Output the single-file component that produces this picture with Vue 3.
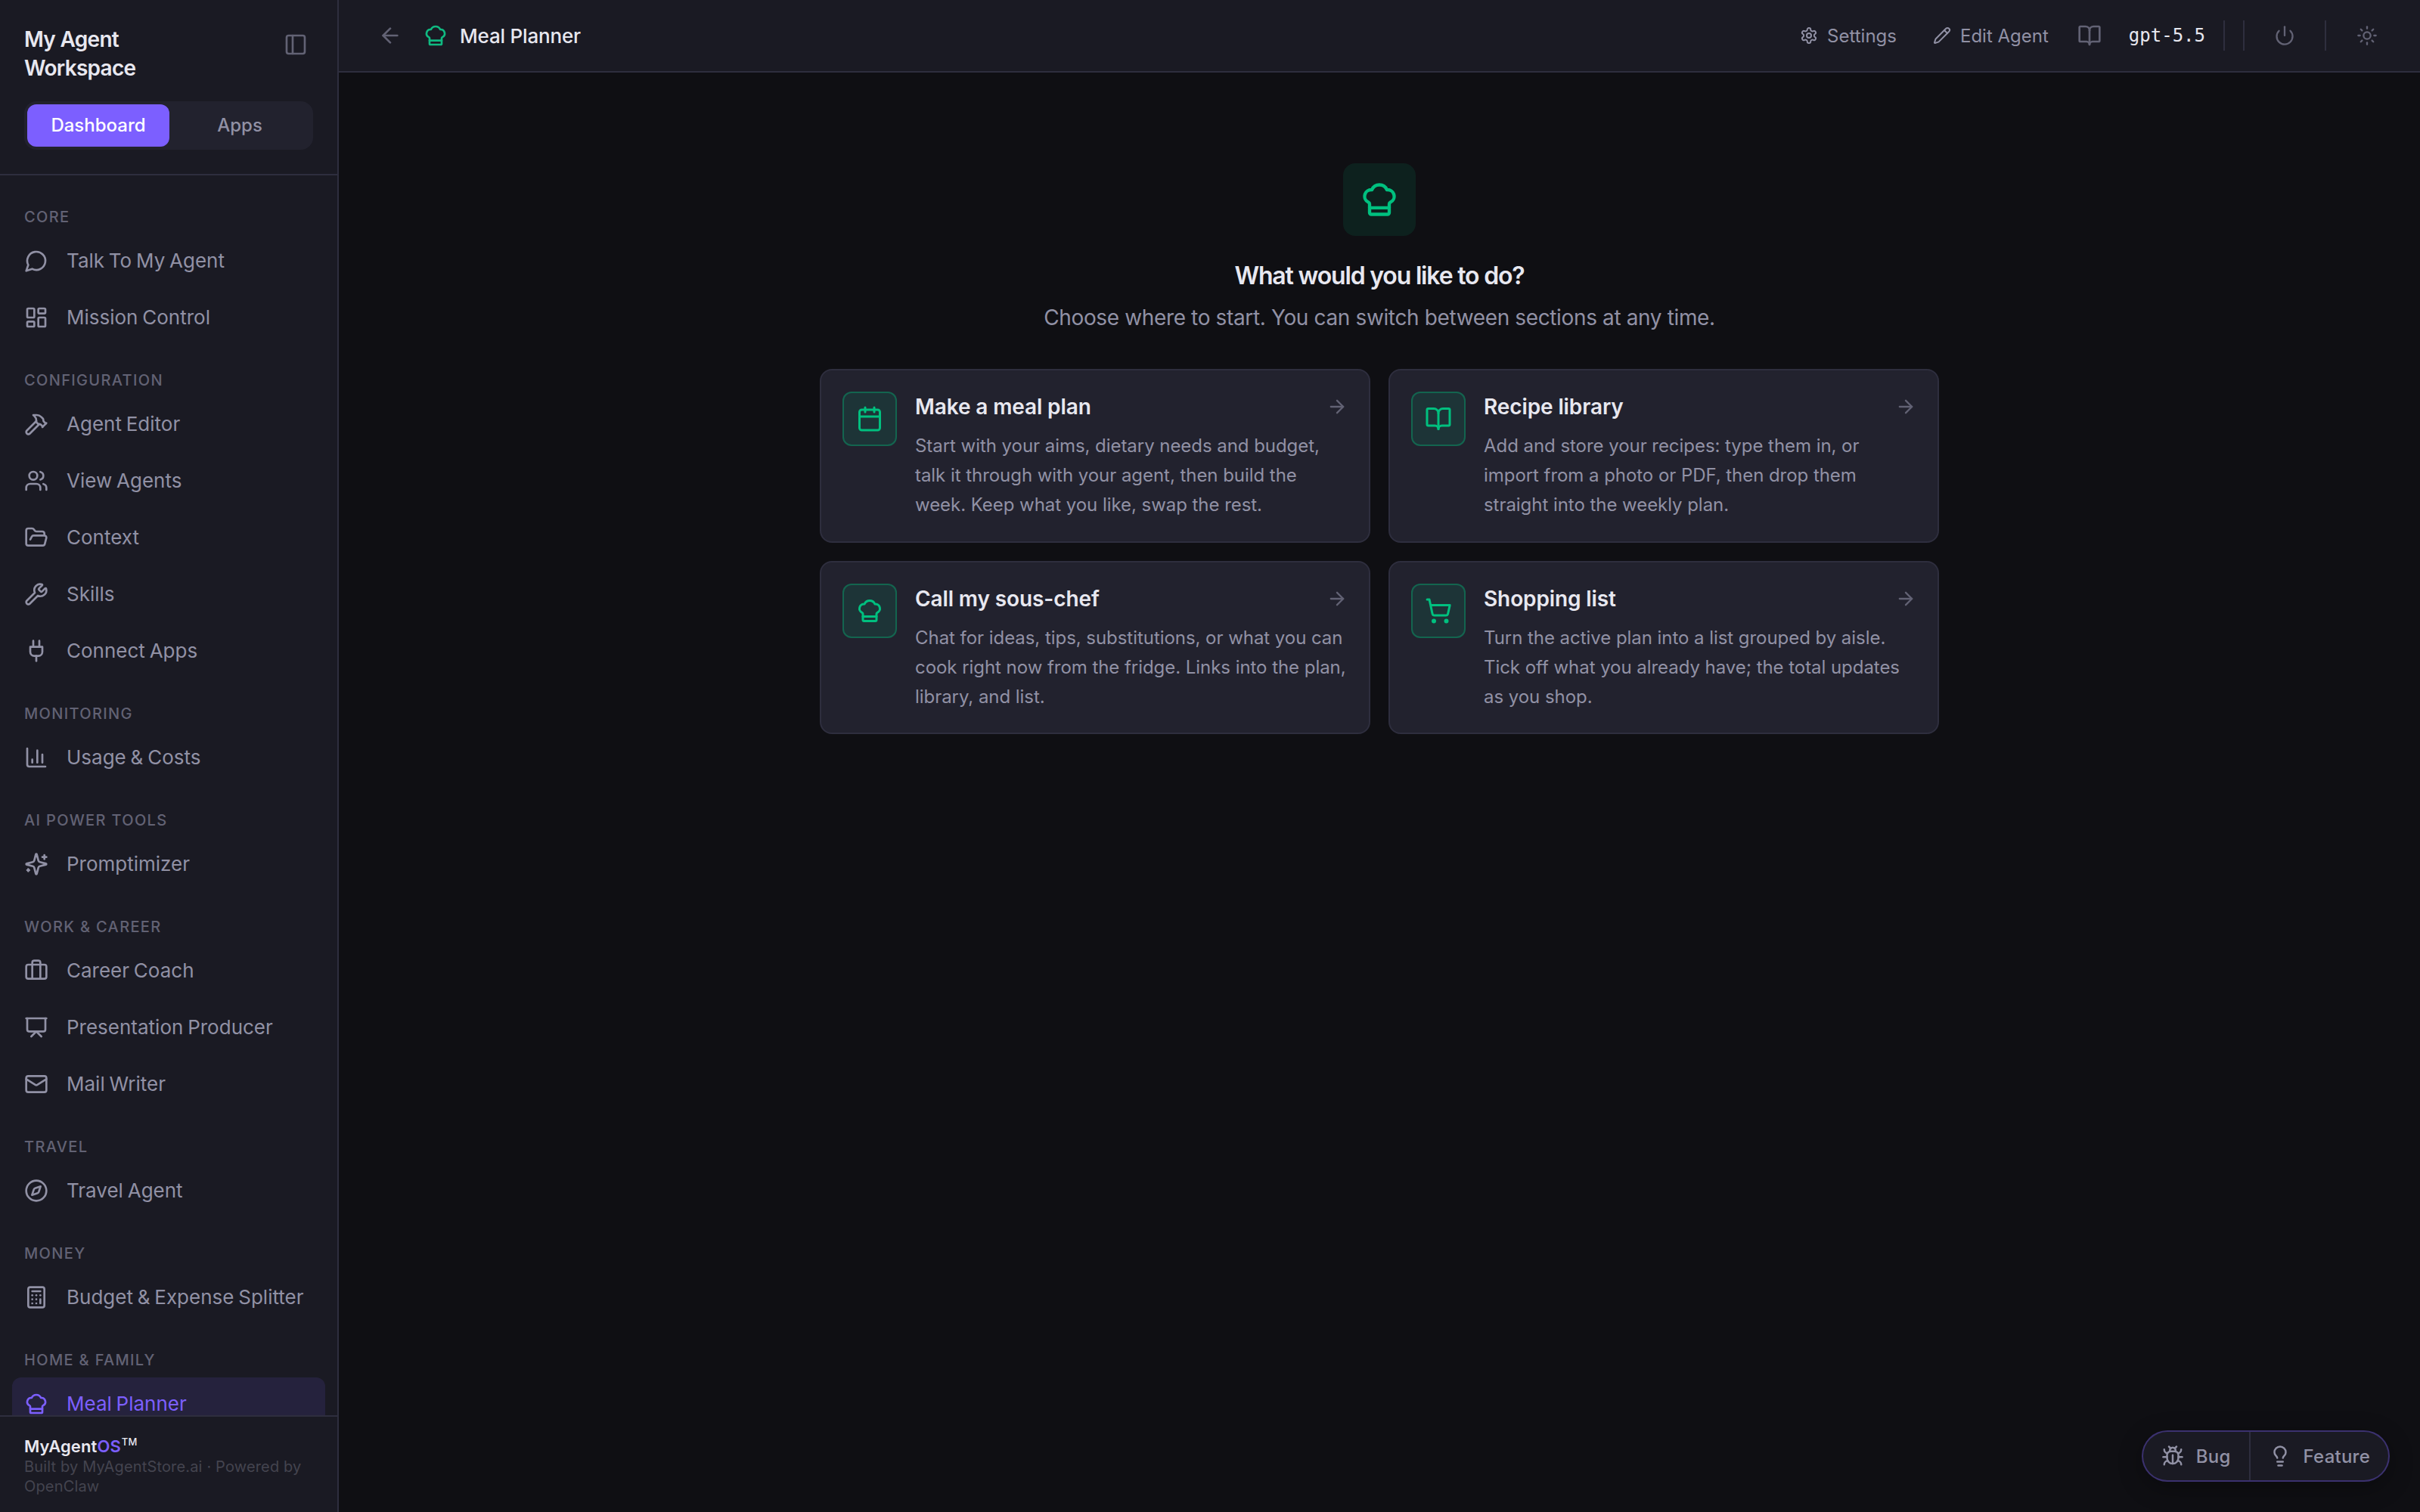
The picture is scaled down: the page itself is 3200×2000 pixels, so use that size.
<template>
  <div class="workspace">
    <aside class="sidebar">
      <div class="sidebar-head">
        <div class="brand-row">
          <h1 class="brand">My Agent<br>Workspace</h1>
          <button class="icon-btn collapse" aria-label="Collapse sidebar">
            <Icon name="panelLeft" :size="32" />
          </button>
        </div>
        <div class="tabs">
          <button
            v-for="tab in tabs"
            :key="tab"
            class="tab"
            :class="{ active: tab === activeTab }"
            @click="activeTab = tab"
          >{{ tab }}</button>
        </div>
      </div>

      <nav class="nav">
        <section v-for="group in groups" :key="group.title" class="nav-group">
          <h2 class="nav-title">{{ group.title }}</h2>
          <a
            v-for="item in group.items"
            :key="item.label"
            class="nav-item"
            :class="{ active: item.label === activeItem }"
            @click="activeItem = item.label"
          >
            <Icon :name="item.icon" :size="32" />
            <span>{{ item.label }}</span>
          </a>
        </section>
      </nav>

      <footer class="sidebar-foot">
        <div class="product">MyAgent<span class="os">OS</span><sup>TM</sup></div>
        <p class="credits">Built by MyAgentStore.ai · Powered by OpenClaw</p>
      </footer>
    </aside>

    <main class="main">
      <header class="topbar">
        <button class="icon-btn back" aria-label="Back">
          <Icon name="arrowLeft" :size="32" />
        </button>
        <Icon class="topbar-logo" name="chefHat" :size="32" />
        <span class="topbar-title">Meal Planner</span>
        <div class="topbar-actions">
          <button class="action settings"><Icon name="settings" :size="24" />Settings</button>
          <button class="action edit"><Icon name="pencil" :size="24" />Edit Agent</button>
          <button class="icon-btn docs" aria-label="Docs"><Icon name="bookOpen" :size="32" /></button>
          <span class="model">gpt-5.5</span>
          <span class="divider"></span>
          <span class="divider second"></span>
          <button class="icon-btn power" aria-label="Power"><Icon name="power" :size="28" /></button>
          <span class="divider"></span>
          <button class="icon-btn theme" aria-label="Theme"><Icon name="sun" :size="28" /></button>
        </div>
      </header>

      <div class="content">
        <div class="hero-icon"><Icon name="chefHat" :size="52" /></div>
        <h2 class="hero-title">What would you like to do?</h2>
        <p class="hero-sub">Choose where to start. You can switch between sections at any time.</p>

        <div class="cards">
          <a v-for="card in cards" :key="card.title" class="card">
            <span class="card-icon"><Icon :name="card.icon" :size="36" /></span>
            <div class="card-body">
              <div class="card-head">
                <h3>{{ card.title }}</h3>
                <Icon class="card-arrow" name="arrowRight" :size="28" />
              </div>
              <p>{{ card.text }}</p>
            </div>
          </a>
        </div>
      </div>
    </main>

    <div class="feedback">
      <button><Icon name="bug" :size="30" />Bug</button>
      <button><Icon name="lightbulb" :size="30" />Feature</button>
    </div>
  </div>
</template>

<script setup>
import { ref, h } from 'vue';

const paths = {
  panelLeft: ['M5 3h14a2 2 0 0 1 2 2v14a2 2 0 0 1-2 2H5a2 2 0 0 1-2-2V5a2 2 0 0 1 2-2z', 'M9 3v18'],
  messageCircle: ['M7.9 20A9 9 0 1 0 4 16.1L2 22Z'],
  dashboard: [
    'M4 3h5a1 1 0 0 1 1 1v7a1 1 0 0 1-1 1H4a1 1 0 0 1-1-1V4a1 1 0 0 1 1-1z',
    'M15 3h5a1 1 0 0 1 1 1v3a1 1 0 0 1-1 1h-5a1 1 0 0 1-1-1V4a1 1 0 0 1 1-1z',
    'M15 12h5a1 1 0 0 1 1 1v7a1 1 0 0 1-1 1h-5a1 1 0 0 1-1-1v-7a1 1 0 0 1 1-1z',
    'M4 16h5a1 1 0 0 1 1 1v3a1 1 0 0 1-1 1H4a1 1 0 0 1-1-1v-3a1 1 0 0 1 1-1z',
  ],
  hammer: [
    'm15 12-9.373 9.373a1 1 0 0 1-3.001-3L12 9',
    'm18 15 4-4',
    'm21.5 11.5-1.914-1.914A2 2 0 0 1 19 8.172v-.344a2 2 0 0 0-.586-1.414l-1.657-1.657A6 6 0 0 0 12.516 3H9l1.243 1.243A6 6 0 0 1 12 8.485V10l2 2h1.172a2 2 0 0 1 1.414.586L18.5 14.5',
  ],
  users: [
    'M16 21v-2a4 4 0 0 0-4-4H6a4 4 0 0 0-4 4v2',
    'M5 7a4 4 0 1 0 8 0a4 4 0 1 0-8 0',
    'M22 21v-2a4 4 0 0 0-3-3.87',
    'M16 3.13a4 4 0 0 1 0 7.75',
  ],
  folderOpen: [
    'm6 14 1.5-2.9A2 2 0 0 1 9.24 10H20a2 2 0 0 1 1.94 2.5l-1.54 6a2 2 0 0 1-1.95 1.5H4a2 2 0 0 1-2-2V5a2 2 0 0 1 2-2h3.9a2 2 0 0 1 1.69.9l.81 1.2a2 2 0 0 0 1.67.9H18a2 2 0 0 1 2 2v2',
  ],
  wrench: [
    'M14.7 6.3a1 1 0 0 0 0 1.4l1.6 1.6a1 1 0 0 0 1.4 0l3.106-3.105c.32-.322.863-.22.983.218a6 6 0 0 1-8.259 7.057l-7.91 7.91a1 1 0 0 1-2.999-3l7.91-7.91a6 6 0 0 1 7.057-8.259c.438.12.54.662.219.984z',
  ],
  plug: ['M12 22v-5', 'M9 8V2', 'M15 8V2', 'M18 8v5a4 4 0 0 1-4 4h-4a4 4 0 0 1-4-4V8Z'],
  chart: ['M3 3v16a2 2 0 0 0 2 2h16', 'M18 17V9', 'M13 17V5', 'M8 17v-3'],
  sparkles: [
    'M9.937 15.5A2 2 0 0 0 8.5 14.063l-6.135-1.582a.5.5 0 0 1 0-.962L8.5 9.936A2 2 0 0 0 9.937 8.5l1.582-6.135a.5.5 0 0 1 .963 0L14.063 8.5A2 2 0 0 0 15.5 9.937l6.135 1.581a.5.5 0 0 1 0 .964L15.5 14.063a2 2 0 0 0-1.437 1.437l-1.582 6.135a.5.5 0 0 1-.963 0z',
    'M20 3v4',
    'M22 5h-4',
    'M4 17v2',
    'M5 18H3',
  ],
  briefcase: [
    'M16 20V4a2 2 0 0 0-2-2h-4a2 2 0 0 0-2 2v16',
    'M4 6h16a2 2 0 0 1 2 2v10a2 2 0 0 1-2 2H4a2 2 0 0 1-2-2V8a2 2 0 0 1 2-2z',
  ],
  presentation: ['M2 3h20', 'M21 3v11a2 2 0 0 1-2 2H5a2 2 0 0 1-2-2V3', 'm7 21 5-5 5 5'],
  mail: [
    'M4 4h16a2 2 0 0 1 2 2v12a2 2 0 0 1-2 2H4a2 2 0 0 1-2-2V6a2 2 0 0 1 2-2z',
    'm22 7-8.97 5.7a1.94 1.94 0 0 1-2.06 0L2 7',
  ],
  compass: [
    'M2 12a10 10 0 1 0 20 0a10 10 0 1 0-20 0',
    'm16.24 7.76-1.804 5.411a2 2 0 0 1-1.265 1.265L7.76 16.24l1.804-5.411a2 2 0 0 1 1.265-1.265z',
  ],
  calculator: [
    'M6 2h12a2 2 0 0 1 2 2v16a2 2 0 0 1-2 2H6a2 2 0 0 1-2-2V4a2 2 0 0 1 2-2z',
    'M8 6h8',
    'M16 14v4',
    'M16 10h.01',
    'M12 10h.01',
    'M8 10h.01',
    'M12 14h.01',
    'M8 14h.01',
    'M12 18h.01',
    'M8 18h.01',
  ],
  chefHat: [
    'M17 21a1 1 0 0 0 1-1v-5.35c0-.457.316-.844.727-1.041a4 4 0 0 0-2.134-7.589 5 5 0 0 0-9.186 0 4 4 0 0 0-2.134 7.588c.411.198.727.585.727 1.041V20a1 1 0 0 0 1 1Z',
    'M6 17h12',
  ],
  arrowLeft: ['m12 19-7-7 7-7', 'M19 12H5'],
  arrowRight: ['M5 12h14', 'm12 5 7 7-7 7'],
  settings: [
    'M12.22 2h-.44a2 2 0 0 0-2 2v.18a2 2 0 0 1-1 1.73l-.43.25a2 2 0 0 1-2 0l-.15-.08a2 2 0 0 0-2.73.73l-.22.38a2 2 0 0 0 .73 2.73l.15.1a2 2 0 0 1 1 1.72v.51a2 2 0 0 1-1 1.74l-.15.09a2 2 0 0 0-.73 2.73l.22.38a2 2 0 0 0 2.73.73l.15-.08a2 2 0 0 1 2 0l.43.25a2 2 0 0 1 1 1.73V20a2 2 0 0 0 2 2h.44a2 2 0 0 0 2-2v-.18a2 2 0 0 1 1-1.73l.43-.25a2 2 0 0 1 2 0l.15.08a2 2 0 0 0 2.73-.73l.22-.39a2 2 0 0 0-.73-2.73l-.15-.08a2 2 0 0 1-1-1.74v-.5a2 2 0 0 1 1-1.74l.15-.09a2 2 0 0 0 .73-2.73l-.22-.38a2 2 0 0 0-2.73-.73l-.15.08a2 2 0 0 1-2 0l-.43-.25a2 2 0 0 1-1-1.73V4a2 2 0 0 0-2-2z',
    'M9 12a3 3 0 1 0 6 0a3 3 0 1 0-6 0',
  ],
  pencil: [
    'M21.174 6.812a1 1 0 0 0-3.986-3.987L3.842 16.174a2 2 0 0 0-.5.83l-1.321 4.352a.5.5 0 0 0 .623.622l4.353-1.32a2 2 0 0 0 .83-.497z',
    'm15 5 4 4',
  ],
  bookOpen: [
    'M12 7v14',
    'M3 18a1 1 0 0 1-1-1V4a1 1 0 0 1 1-1h5a4 4 0 0 1 4 4 4 4 0 0 1 4-4h5a1 1 0 0 1 1 1v13a1 1 0 0 1-1 1h-6a3 3 0 0 0-3 3 3 3 0 0 0-3-3z',
  ],
  power: ['M12 2v10', 'M18.4 6.6a9 9 0 1 1-12.77.04'],
  sun: [
    'M8 12a4 4 0 1 0 8 0a4 4 0 1 0-8 0',
    'M12 2v2',
    'M12 20v2',
    'm4.93 4.93 1.41 1.41',
    'm17.66 17.66 1.41 1.41',
    'M2 12h2',
    'M20 12h2',
    'm6.34 17.66-1.41 1.41',
    'm19.07 4.93-1.41 1.41',
  ],
  calendar: [
    'M8 2v4',
    'M16 2v4',
    'M5 4h14a2 2 0 0 1 2 2v14a2 2 0 0 1-2 2H5a2 2 0 0 1-2-2V6a2 2 0 0 1 2-2z',
    'M3 10h18',
  ],
  cart: [
    'M7 21a1 1 0 1 0 2 0a1 1 0 1 0-2 0',
    'M18 21a1 1 0 1 0 2 0a1 1 0 1 0-2 0',
    'M2.05 2.05h2l2.66 12.42a2 2 0 0 0 2 1.58h9.78a2 2 0 0 0 1.95-1.57l1.65-7.43H5.12',
  ],
  bug: [
    'm8 2 1.88 1.88',
    'M14.12 3.88 16 2',
    'M9 7.13v-1a3.003 3.003 0 1 1 6 0v1',
    'M12 20c-3.3 0-6-2.7-6-6v-3a4 4 0 0 1 4-4h4a4 4 0 0 1 4 4v3c0 3.3-2.7 6-6 6',
    'M12 20v-9',
    'M6.53 9C4.6 8.8 3 7.1 3 5',
    'M6 13H2',
    'M3 21c0-2.1 1.7-3.9 3.8-4',
    'M20.97 5c0 2.1-1.6 3.8-3.5 4',
    'M22 13h-4',
    'M17.2 17c2.1.1 3.8 1.9 3.8 4',
  ],
  lightbulb: [
    'M15 14c.2-1 .7-1.7 1.5-2.5 1-.9 1.5-2.2 1.5-3.5A6 6 0 0 0 6 8c0 1 .2 2.2 1.5 3.5.7.7 1.3 1.5 1.5 2.5',
    'M9 18h6',
    'M10 22h4',
  ],
};

// 24x24 outline icon
const Icon = (props) =>
  h(
    'svg',
    {
      width: props.size,
      height: props.size,
      viewBox: '0 0 24 24',
      fill: 'none',
      stroke: 'currentColor',
      'stroke-width': 2,
      'stroke-linecap': 'round',
      'stroke-linejoin': 'round',
    },
    paths[props.name].map((d) => h('path', { d }))
  );
Icon.props = ['name', 'size'];

const tabs = ['Dashboard', 'Apps'];
const activeTab = ref('Dashboard');
const activeItem = ref('Meal Planner');

const groups = [
  {
    title: 'Core',
    items: [
      { label: 'Talk To My Agent', icon: 'messageCircle' },
      { label: 'Mission Control', icon: 'dashboard' },
    ],
  },
  {
    title: 'Configuration',
    items: [
      { label: 'Agent Editor', icon: 'hammer' },
      { label: 'View Agents', icon: 'users' },
      { label: 'Context', icon: 'folderOpen' },
      { label: 'Skills', icon: 'wrench' },
      { label: 'Connect Apps', icon: 'plug' },
    ],
  },
  { title: 'Monitoring', items: [{ label: 'Usage & Costs', icon: 'chart' }] },
  { title: 'AI Power Tools', items: [{ label: 'Promptimizer', icon: 'sparkles' }] },
  {
    title: 'Work & Career',
    items: [
      { label: 'Career Coach', icon: 'briefcase' },
      { label: 'Presentation Producer', icon: 'presentation' },
      { label: 'Mail Writer', icon: 'mail' },
    ],
  },
  { title: 'Travel', items: [{ label: 'Travel Agent', icon: 'compass' }] },
  { title: 'Money', items: [{ label: 'Budget & Expense Splitter', icon: 'calculator' }] },
  { title: 'Home & Family', items: [{ label: 'Meal Planner', icon: 'chefHat' }] },
];

const cards = [
  {
    title: 'Make a meal plan',
    icon: 'calendar',
    text: 'Start with your aims, dietary needs and budget, talk it through with your agent, then build the week. Keep what you like, swap the rest.',
  },
  {
    title: 'Recipe library',
    icon: 'bookOpen',
    text: 'Add and store your recipes: type them in, or import from a photo or PDF, then drop them straight into the weekly plan.',
  },
  {
    title: 'Call my sous-chef',
    icon: 'chefHat',
    text: 'Chat for ideas, tips, substitutions, or what you can cook right now from the fridge. Links into the plan, library, and list.',
  },
  {
    title: 'Shopping list',
    icon: 'cart',
    text: 'Turn the active plan into a list grouped by aisle. Tick off what you already have; the total updates as you shop.',
  },
];
</script>

<style>
body {
  background: #0f0f13;
}
</style>

<style scoped>
.workspace {
  --side: #1a1a23;
  --panel: #22222e;
  --line: #2e2e3e;
  --text: #e8e8f0;
  --soft: #9191a5;
  --dim: #626274;
  --accent: #7c5fff;
  --green: #00c07f;
  display: flex;
  height: 2000px;
  overflow: hidden;
  background: #0f0f13;
  color: var(--text);
  font-family: Inter, sans-serif;
  font-size: 26px;
}

.workspace *,
.workspace {
  box-sizing: border-box;
}

h1,
h2,
h3,
p {
  margin: 0;
}

svg {
  display: block;
  flex-shrink: 0;
}

button {
  display: flex;
  align-items: center;
  padding: 0;
  border: 0;
  background: none;
  color: inherit;
  font: inherit;
  letter-spacing: inherit;
  cursor: pointer;
}

.icon-btn {
  color: var(--dim);
}

/* sidebar */
.sidebar {
  display: flex;
  flex-direction: column;
  flex-shrink: 0;
  width: 448px;
  border-right: 2px solid var(--line);
  background: var(--side);
}

.sidebar-head {
  height: 232px;
  flex-shrink: 0;
  padding: 32px 32px 0;
  border-bottom: 2px solid var(--line);
}

.brand-row {
  display: flex;
  justify-content: space-between;
  align-items: flex-start;
  height: 102px;
}

.brand {
  padding-top: 1px;
  font-size: 28px;
  line-height: 38px;
  font-weight: 600;
  letter-spacing: -0.025em;
}

.collapse {
  margin: 11px 7px 0 0;
}

.tabs {
  display: flex;
  width: 382px;
  height: 64px;
  padding: 4px;
  border-radius: 16px;
  background: var(--panel);
}

.tab {
  flex: 1;
  justify-content: center;
  padding-bottom: 2px;
  border-radius: 12px;
  color: var(--soft);
  font-size: 24px;
  font-weight: 500;
}

.tab.active {
  flex: 0 0 188px;
  background: var(--accent);
  color: #fff;
}

.nav {
  flex: 1;
  min-height: 0;
  overflow: hidden;
  padding: 40px 16px 0;
}

.nav-group {
  display: flex;
  flex-direction: column;
  gap: 4px;
  margin-bottom: 32px;
}

.nav-title {
  margin-bottom: 4px;
  padding: 0 16px;
  color: var(--dim);
  font-size: 20px;
  line-height: 30px;
  font-weight: 500;
  letter-spacing: 0.067em;
  text-transform: uppercase;
}

.nav-item {
  display: flex;
  align-items: center;
  gap: 24px;
  height: 71px;
  padding: 0 16px 2px;
  border-radius: 12px;
  color: var(--soft);
  line-height: 39px;
  word-spacing: -1.5px;
  white-space: nowrap;
  cursor: pointer;
}

.nav-item span {
  padding-bottom: 1px;
}

.nav-item.active {
  background: rgba(124, 95, 255, 0.12);
  color: var(--accent);
}

.sidebar-foot {
  flex-shrink: 0;
  height: 128px;
  padding: 25px 32px 0;
  border-top: 2px solid var(--line);
}

.product {
  font-size: 22px;
  line-height: 28px;
  font-weight: 600;
  letter-spacing: 0.005em;
}

.product .os {
  color: var(--accent);
}

.product sup {
  margin-left: 1px;
  font-size: 13px;
  line-height: 0;
  font-weight: 500;
  vertical-align: 9px;
}

.credits {
  color: #44444f;
  font-size: 20px;
  line-height: 26px;
  letter-spacing: 0.008em;
}

/* main */
.main {
  flex: 1;
  min-width: 0;
}

.topbar {
  display: flex;
  align-items: center;
  height: 96px;
  padding: 0 56px 0 52px;
  border-bottom: 2px solid var(--line);
  background: var(--side);
}

.back {
  margin-right: 28px;
}

.topbar-logo {
  margin-right: 16px;
  color: #10b981;
}

.topbar-title {
  font-weight: 500;
  letter-spacing: -0.007em;
}

.topbar-actions {
  display: flex;
  align-items: center;
  margin-left: auto;
}

.action {
  gap: 12px;
  color: var(--soft);
  font-size: 24px;
}

.edit {
  margin-left: 48px;
}

.docs {
  margin: 0 36px 0 38px;
}

.model {
  margin-right: 24px;
  font-family: "DejaVu Sans Mono", monospace;
  font-size: 24px;
}

.divider {
  width: 2px;
  height: 40px;
  background: var(--line);
}

.second {
  margin-left: 24px;
}

.power {
  margin: 0 39px;
}

.theme {
  margin-left: 40px;
}

.content {
  display: flex;
  flex-direction: column;
  align-items: center;
  padding-top: 120px;
}

.hero-icon {
  display: flex;
  align-items: center;
  justify-content: center;
  width: 96px;
  height: 96px;
  border-radius: 16px;
  background: rgba(0, 192, 127, 0.1);
  color: var(--green);
}

.hero-title {
  margin-top: 29px;
  font-size: 32px;
  line-height: 48px;
  font-weight: 600;
  letter-spacing: -0.037em;
}

.hero-sub {
  margin-top: 10px;
  color: var(--soft);
  font-size: 28px;
  line-height: 42px;
  letter-spacing: -0.013em;
}

.cards {
  display: grid;
  grid-template-columns: 728px 728px;
  gap: 24px;
  margin-top: 47px;
}

.card {
  display: flex;
  gap: 24px;
  height: 229.5px;
  padding: 28px;
  border: 2px solid var(--line);
  border-radius: 16px;
  background: var(--panel);
  cursor: pointer;
}

.card-icon {
  display: flex;
  align-items: center;
  justify-content: center;
  flex-shrink: 0;
  width: 72px;
  height: 72px;
  border: 2px solid rgba(0, 192, 127, 0.35);
  border-radius: 12px;
  background: rgba(0, 192, 127, 0.12);
  color: var(--green);
}

.card-body {
  flex: 1;
  min-width: 0;
}

.card-head {
  display: flex;
  align-items: center;
  justify-content: space-between;
  height: 40px;
}

.card-head h3 {
  font-size: 28px;
  line-height: 40px;
  font-weight: 600;
  letter-spacing: -0.004em;
}

.card-arrow {
  color: var(--dim);
}

.card p {
  margin: 12px -1px 0 0;
  color: var(--soft);
  font-size: 24px;
  line-height: 39px;
  letter-spacing: -0.002em;
}

/* floats over the page in the lower right corner */
.feedback {
  position: absolute;
  right: 40px;
  top: 1892px;
  display: flex;
  height: 68px;
  border: 2px solid rgba(124, 95, 255, 0.35);
  border-radius: 34px;
  background: var(--side);
  box-shadow: 0 8px 32px rgba(0, 0, 0, 0.3);
}

.feedback button {
  gap: 16px;
  padding: 0 24px;
  color: var(--soft);
  font-size: 24px;
  font-weight: 500;
  letter-spacing: 0.01em;
}

.feedback button + button {
  border-left: 2px solid var(--line);
}
</style>
